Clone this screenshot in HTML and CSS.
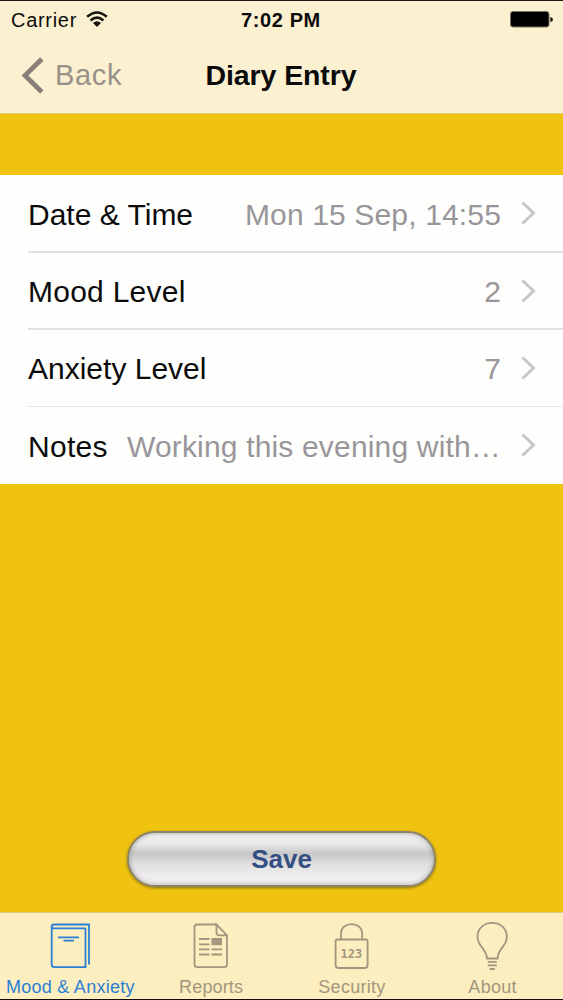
FILE: index.html
```
<!DOCTYPE html>
<html lang="en">

<head>
    <meta charset="UTF-8">
    <title>Diary Entry</title>
    <link rel="stylesheet" href="styles.css">
</head>

<body>
    <div class="screen">
        <header class="header">
            <div class="status">
                <div class="carrier">
                    <span>Carrier</span>
                    <svg class="wifi" width="22" height="17" viewBox="0 0 22 17">
                        <path d="M1.2 5.8Q11-2.8 20.8 5.8M4.6 9.5Q11 3.8 17.4 9.5" fill="none" stroke="#16120c" stroke-width="2.6" />
                        <path d="M7 12Q11 8.4 15 12L11 16Z" fill="#16120c" />
                    </svg>
                </div>
                <div class="time">7:02 PM</div>
                <svg class="battery" width="43" height="18" viewBox="0 0 43 18">
                    <rect x=".5" y=".5" width="38.5" height="15.5" rx="2.5" fill="#000" stroke="#777260" />
                    <path d="M40.3 6Q43 6.5 43 8.5T40.3 11Z" fill="#16120c" />
                </svg>
            </div>
            <div class="nav">
                <a class="back" href="#">
                    <svg width="23" height="37" viewBox="0 0 23 37">
                        <path d="M20.8 2L4 18.5L20.8 35" fill="none" stroke="#888078" stroke-width="4.8" />
                    </svg>
                    <span>Back</span>
                </a>
                <h1 class="title">Diary Entry</h1>
            </div>
        </header>

        <main class="content">
            <ul class="list">
                <li class="row">
                    <span class="label date">Date &amp; Time</span>
                    <span class="value when">Mon 15 Sep, 14:55</span>
                    <svg class="arrow" width="15" height="24" viewBox="0 0 15 24"><path d="M1.5 1.5L12.5 12L1.5 22.5" /></svg>
                </li>
                <li class="row">
                    <span class="label mood">Mood Level</span>
                    <span class="value">2</span>
                    <svg class="arrow" width="15" height="24" viewBox="0 0 15 24"><path d="M1.5 1.5L12.5 12L1.5 22.5" /></svg>
                </li>
                <li class="row">
                    <span class="label anxiety">Anxiety Level</span>
                    <span class="value">7</span>
                    <svg class="arrow" width="15" height="24" viewBox="0 0 15 24"><path d="M1.5 1.5L12.5 12L1.5 22.5" /></svg>
                </li>
                <li class="row">
                    <span class="label notes">Notes</span>
                    <span class="value note">Working this evening with…</span>
                    <svg class="arrow" width="15" height="24" viewBox="0 0 15 24"><path d="M1.5 1.5L12.5 12L1.5 22.5" /></svg>
                </li>
            </ul>
            <button class="save" type="button">Save</button>
        </main>

        <nav class="tabs">
            <a class="tab active" href="#">
                <svg width="42" height="50" viewBox="0 0 42 50">
                    <path d="M37 6.3H5Q2.7 6.3 2.7 4.4T5 2.5H40V42.5M2.7 4.5V42.5Q2.7 45.2 5.5 45.2H36.5V6.3" />
                    <path d="M9 15.3H30M14.5 18.7H25" />
                </svg>
                <span class="tab1">Mood &amp; Anxiety</span>
            </a>
            <a class="tab" href="#">
                <svg width="42" height="50" viewBox="0 0 42 50">
                    <path d="M26.5 2.5H7.5Q4.5 2.5 4.5 5.5V42.5Q4.5 45.2 7.5 45.2H34Q37 45.2 37 42.5V13.3L26.5 2.5V10.5Q26.5 13.3 29.5 13.3H37" />
                    <path d="M9 17H19.5M9 22.3H19.5M9 27.3H19.5M9 32.5H19.5M21.5 27.3H32M21.5 32.5H32" />
                    <path class="solid" d="M21.5 16H32V23.2H21.5Z" />
                </svg>
                <span class="tab2">Reports</span>
            </a>
            <a class="tab" href="#">
                <svg width="42" height="50" viewBox="0 0 42 50">
                    <path d="M10 17.5V12C10-1.3 31.2-1.3 31.2 12V17.5M6.5 17.5H34.8Q36.6 17.5 36.6 19.3V43Q36.6 46 33.6 46H7.5Q4.6 46 4.6 43V19.3Q4.6 17.5 6.5 17.5Z" />
                    <text x="20.3" y="36.3">123</text>
                </svg>
                <span class="tab3">Security</span>
            </a>
            <a class="tab" href="#">
                <svg width="42" height="50" viewBox="0 0 42 50">
                    <path d="M15 36.5C14.5 26 5.5 25 5.5 14.8C5.5-3.8 34.8-3.8 34.8 14.8C34.8 25 26 26 25.5 36.5Z" />
                    <path d="M15.8 39.8H24.8M15.8 43.3H24.8M17.8 47H22.8" />
                </svg>
                <span class="tab4">About</span>
            </a>
        </nav>
    </div>
</body>

</html>
```
FILE: styles.css
```
* {
    margin: 0;
    padding: 0;
    box-sizing: border-box;
}

body {
    font-family: "Liberation Sans", Arial, sans-serif;
    color: #0b0b0b;
}

a {
    color: inherit;
    text-decoration: none;
}

.screen {
    width: 563px;
    height: 1000px;
    display: flex;
    flex-direction: column;
    overflow: hidden;
    background: #f0c311;
    border-top: 1px solid #2a1015;
    border-bottom: 1px solid #160a08;
}

/* header */
.header {
    height: 113px;
    background: #fbf0d0;
    border-bottom: 1px solid #dfc878;
}

.status {
    height: 37px;
    display: grid;
    grid-template-columns: 1fr auto 1fr;
    align-items: center;
    padding: 0 10px 0 11px;
    font-size: 20px;
    line-height: 36px;
}

.carrier {
    display: flex;
    align-items: center;
    gap: 9px;
    letter-spacing: .7px;
}

.time {
    font-size: 20px;
    font-weight: bold;
    letter-spacing: .6px;
    margin-right: 2px;
}

.battery {
    justify-self: end;
}

.nav {
    height: 75px;
    display: grid;
    grid-template-columns: 1fr auto 1fr;
    align-items: center;
    padding: 0 22px 0 21px;
}

.back {
    display: flex;
    align-items: center;
    gap: 11px;
    color: #98918a;
    font-size: 29px;
    letter-spacing: .7px;
}

.title {
    padding-bottom: 1px;
    font-size: 28.5px;
    line-height: 34px;
    letter-spacing: -.1px;
}

/* list */
.content {
    flex: 1;
    display: flex;
    flex-direction: column;
    align-items: center;
    justify-content: space-between;
    padding: 61px 0 25px;
}

.list {
    width: 100%;
    height: 309px;
    background: #fefefd;
    list-style: none;
    padding-left: 28px;
}

.row {
    display: flex;
    align-items: center;
    height: 77.4px;
    padding-right: 27px;
    border-bottom: 2px solid #e0e0e0;
    font-size: 30px;
    white-space: nowrap;
}

.row:first-child {
    height: 78px;
}

.row:nth-child(2) {
    height: 77px;
}

.row:nth-child(3) {
    height: 77px;
    border-bottom: 1px solid #e5e5e5;
}

.row:last-child {
    height: 77px;
    border-bottom: none;
}

.label,
.value {
    padding-top: 3px;
}

.row:nth-child(n+3) .label,
.row:nth-child(n+3) .value {
    padding-top: 2px;
}

.mood {
    letter-spacing: .25px;
}

.notes {
    letter-spacing: .3px;
}

.value {
    margin-left: auto;
    color: #98969a;
}

.when {
    letter-spacing: .15px;
}

.note {
    letter-spacing: .17px;
}

.arrow {
    margin-left: 20px;
}

.row:nth-child(n+3) .arrow {
    margin-bottom: 1px;
}

.arrow path {
    fill: none;
    stroke: #c7c7c9;
    stroke-width: 3;
}

.save {
    width: 309px;
    height: 56px;
    border: 2px solid #8c8468;
    border-radius: 28px;
    background: linear-gradient(#f4f3f3 0%, #e9e8e8 22%, #c9c8c8 39%, #cfcece 46%, #e0dfdf 58%, #eeecee 82%, #f4f3f4 100%);
    box-shadow: 0 1px 3px rgba(90, 75, 10, .7), inset 0 0 5px rgba(110, 110, 105, .6);
    color: #344e83;
    font: bold 26px "Liberation Sans", Arial, sans-serif;
}

/* tabs */
.tabs {
    height: 87px;
    display: grid;
    grid-template-columns: repeat(4, 1fr);
    background: #fceebf;
    border-top: 1px solid #dfc878;
}

.tab {
    display: flex;
    flex-direction: column;
    align-items: center;
    padding-top: 9px;
    color: #a3967f;
    font-size: 18px;
    line-height: 31px;
    white-space: nowrap;
}

.tab.active {
    color: #2b7fd6;
}

.tab svg {
    flex: none;
    fill: none;
    stroke: currentColor;
    stroke-width: 1.8;
}

.tab .solid {
    fill: currentColor;
    stroke: none;
}

.tab text {
    fill: currentColor;
    stroke: none;
    font: bold 12px "DejaVu Sans Mono", monospace;
    text-anchor: middle;
}

.tab1 {
    letter-spacing: .25px;
}

.tab2 {
    letter-spacing: .15px;
}

.tab3 {
    letter-spacing: .25px;
}

.tab4 {
    letter-spacing: .3px;
}
```
